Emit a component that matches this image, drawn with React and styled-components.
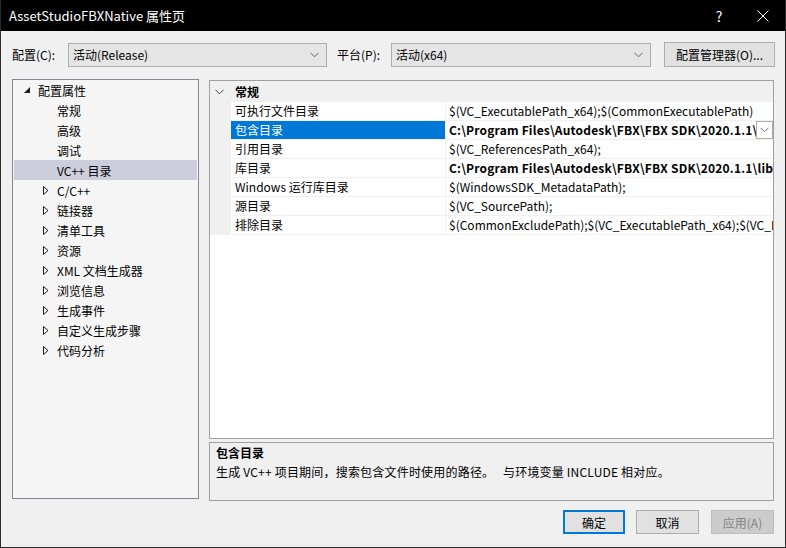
import React from "react";
import styled, { createGlobalStyle } from "styled-components";

const GlobalStyle = createGlobalStyle`
  html, body {
    margin: 0;
    padding: 0;
    background: #f0f0f0;
  }
  * {
    box-sizing: border-box;
  }
`;

const Window = styled.div`
  width: 786px;
  height: 548px;
  display: flex;
  flex-direction: column;
  background: #f0f0f0;
  border: 1px solid #2b2b2b;
  border-top: none;
  font-family: "Noto Sans CJK SC", "Microsoft YaHei", sans-serif;
  font-size: 12px;
  color: #000;
  overflow: hidden;
`;

const TitleBar = styled.div`
  height: 31px;
  background: #000;
  color: #fff;
  display: flex;
  align-items: center;
  padding-left: 8px;
  font-size: 13px;
  flex-shrink: 0;
`;

const TitleText = styled.div`
  flex: 1;
`;

const TitleButton = styled.div`
  width: 44px;
  height: 31px;
  display: flex;
  align-items: center;
  justify-content: center;
  font-size: 14px;
  color: #fff;
`;

const Body = styled.div`
  flex: 1;
  display: flex;
  flex-direction: column;
  padding: 11px 11px 0 11px;
`;

const TopRow = styled.div`
  display: flex;
  align-items: center;
  height: 25px;
`;

const Label = styled.div`
  width: ${(p) => p.$w}px;
  padding-left: ${(p) => p.$pl || 0}px;
  flex-shrink: 0;
  line-height: 25px;
`;

const Combo = styled.div`
  width: ${(p) => p.$w}px;
  height: 24px;
  background: #e5e5e5;
  border: 1px solid #adadad;
  display: flex;
  align-items: center;
  padding: 0 7px 0 4px;
  flex-shrink: 0;
`;

const ComboText = styled.div`
  flex: 1;
`;

const PushButton = styled.div`
  width: ${(p) => p.$w}px;
  height: ${(p) => p.$h || 24}px;
  margin-left: ${(p) => p.$ml || 0}px;
  background: ${(p) => (p.$disabled ? "#cccccc" : "#e1e1e1")};
  border: ${(p) =>
    p.$default ? "2px solid #0078d7" : p.$disabled ? "1px solid #bfbfbf" : "1px solid #adadad"};
  color: ${(p) => (p.$disabled ? "#838383" : "#000")};
  display: flex;
  align-items: center;
  justify-content: center;
  flex-shrink: 0;
`;

const Main = styled.div`
  display: flex;
  margin-top: 12px;
  height: 422px;
`;

const Tree = styled.div`
  width: 187px;
  height: 420px;
  background: #f5f5f5;
  border: 1px solid #828790;
  flex-shrink: 0;
`;

const TreeItem = styled.div`
  height: 20px;
  display: flex;
  align-items: center;
  margin: 0 1px;
  padding-left: ${(p) => p.$indent}px;
  background: ${(p) => (p.$selected ? "#cccedb" : "transparent")};
`;

const Expander = styled.div`
  width: 14px;
  display: flex;
  align-items: center;
`;

const RightCol = styled.div`
  flex: 1;
  min-width: 0;
  margin-left: 10px;
  padding-top: 1px;
  display: flex;
  flex-direction: column;
`;

const Grid = styled.div`
  height: 359px;
  background: #fff;
  border: 1px solid #a0a0a0;
  display: flex;
  flex-direction: column;
  overflow: hidden;
  flex-shrink: 0;
`;

const CategoryRow = styled.div`
  height: 21px;
  background: #f0f0f0;
  display: flex;
  align-items: center;
  font-weight: bold;
  flex-shrink: 0;
`;

const CatChevron = styled.div`
  width: 25px;
  padding-left: 5px;
  display: flex;
  align-items: center;
`;

const PropRow = styled.div`
  height: 19px;
  display: flex;
  border-bottom: 1px solid #f0f0f0;
  flex-shrink: 0;
`;

const Gutter = styled.div`
  width: 21px;
  background: #f0f0f0;
  flex-shrink: 0;
`;

const NameCell = styled.div`
  width: 215px;
  padding-left: 4px;
  line-height: 18px;
  background: ${(p) => (p.$selected ? "#0078d7" : "#fff")};
  color: ${(p) => (p.$selected ? "#fff" : "#000")};
  border-right: 1px solid #f0f0f0;
  flex-shrink: 0;
  white-space: nowrap;
`;

const ValueCell = styled.div`
  flex: 1;
  min-width: 0;
  display: flex;
  padding-left: 3px;
  line-height: 18px;
  font-weight: ${(p) => (p.$bold ? "bold" : "normal")};
  letter-spacing: ${(p) => (p.$bold ? "0.2px" : "0")};
`;

const ValueText = styled.div`
  flex: 1;
  min-width: 0;
  overflow: hidden;
  white-space: nowrap;
`;

const DropButton = styled.div`
  width: 17px;
  height: 18px;
  border: 1px solid #adadad;
  background: #fff;
  display: flex;
  align-items: center;
  justify-content: center;
  flex-shrink: 0;
  font-weight: normal;
`;

const GridFill = styled.div`
  flex: 1;
  background: #fff;
`;

const Description = styled.div`
  margin-top: 3px;
  height: 59px;
  border: 1px solid #a0a0a0;
  background: #f0f0f0;
  padding: 0 6px;
  flex-shrink: 0;
`;

const DescTitle = styled.div`
  font-weight: bold;
  line-height: 20px;
`;

const DescText = styled.div`
  line-height: 18px;
  white-space: pre;
  letter-spacing: 0.2px;
`;

const ButtonRow = styled.div`
  display: flex;
  justify-content: flex-end;
  margin-top: 9px;
`;

const Chevron = ({ color = "#606060" }) => (
  <svg width="9" height="6" viewBox="0 0 9 6">
    <polyline points="0.5,0.8 4.5,4.8 8.5,0.8" fill="none" stroke={color} strokeWidth="1" />
  </svg>
);

const CollapsedArrow = () => (
  <svg width="6" height="9" viewBox="0 0 6 9">
    <polygon points="0.5,0.5 5,4.5 0.5,8.5" fill="none" stroke="#1e1e1e" strokeWidth="1" />
  </svg>
);

const ExpandedArrow = () => (
  <svg width="7" height="7" viewBox="0 0 7 7">
    <polygon points="6,0 6,6 0,6" fill="#1e1e1e" />
  </svg>
);

const treeChildren = ["常规", "高级", "调试", "VC++ 目录"];
const treeGroups = [
  "C/C++",
  "链接器",
  "清单工具",
  "资源",
  "XML 文档生成器",
  "浏览信息",
  "生成事件",
  "自定义生成步骤",
  "代码分析",
];

const props = [
  { name: "可执行文件目录", value: "$(VC_ExecutablePath_x64);$(CommonExecutablePath)" },
  {
    name: "包含目录",
    value: "C:\\Program Files\\Autodesk\\FBX\\FBX SDK\\2020.1.1\\include;$(IncludePath)",
    bold: true,
    selected: true,
  },
  { name: "引用目录", value: "$(VC_ReferencesPath_x64);" },
  {
    name: "库目录",
    value: "C:\\Program Files\\Autodesk\\FBX\\FBX SDK\\2020.1.1\\lib\\vs2017\\x64\\release;$(LibraryPath)",
    bold: true,
  },
  { name: "Windows 运行库目录", value: "$(WindowsSDK_MetadataPath);" },
  { name: "源目录", value: "$(VC_SourcePath);" },
  {
    name: "排除目录",
    value: "$(CommonExcludePath);$(VC_ExecutablePath_x64);$(VC_LibraryPath_x64)",
  },
];

export default function App() {
  return (
    <>
      <GlobalStyle />
      <Window>
        <TitleBar>
          <TitleText>AssetStudioFBXNative 属性页</TitleText>
          <TitleButton>?</TitleButton>
          <TitleButton>
            <svg width="12" height="12" viewBox="0 0 12 12">
              <path d="M0.5 0.5 L11.5 11.5 M11.5 0.5 L0.5 11.5" stroke="#fff" strokeWidth="1" />
            </svg>
          </TitleButton>
        </TitleBar>
        <Body>
          <TopRow>
            <Label $w={56} $pl={0}>配置(C):</Label>
            <Combo $w={259}>
              <ComboText>活动(Release)</ComboText>
              <Chevron />
            </Combo>
            <Label $w={64} $pl={10}>平台(P):</Label>
            <Combo $w={260}>
              <ComboText>活动(x64)</ComboText>
              <Chevron />
            </Combo>
            <PushButton $w={111} $h={25} $ml={13}>
              配置管理器(O)...
            </PushButton>
          </TopRow>

          <Main>
            <Tree>
              <TreeItem $indent={10}>
                <Expander>
                  <ExpandedArrow />
                </Expander>
                配置属性
              </TreeItem>
              {treeChildren.map((t) => (
                <TreeItem key={t} $indent={43} $selected={t === "VC++ 目录"}>
                  {t}
                </TreeItem>
              ))}
              {treeGroups.map((t) => (
                <TreeItem key={t} $indent={29}>
                  <Expander>
                    <CollapsedArrow />
                  </Expander>
                  {t}
                </TreeItem>
              ))}
            </Tree>

            <RightCol>
              <Grid>
                <CategoryRow>
                  <CatChevron>
                    <Chevron color="#404040" />
                  </CatChevron>
                  常规
                </CategoryRow>
                {props.map((p) => (
                  <PropRow key={p.name}>
                    <Gutter />
                    <NameCell $selected={p.selected}>{p.name}</NameCell>
                    <ValueCell $bold={p.bold}>
                      <ValueText>{p.value}</ValueText>
                      {p.selected && (
                        <DropButton>
                          <Chevron color="#707070" />
                        </DropButton>
                      )}
                    </ValueCell>
                  </PropRow>
                ))}
                <GridFill />
              </Grid>
              <Description>
                <DescTitle>包含目录</DescTitle>
                <DescText>
                  {"生成 VC++ 项目期间，搜索包含文件时使用的路径。   与环境变量 INCLUDE 相对应。"}
                </DescText>
              </Description>
            </RightCol>
          </Main>

          <ButtonRow>
            <PushButton $w={62} $default>
              确定
            </PushButton>
            <PushButton $w={63} $ml={11}>
              取消
            </PushButton>
            <PushButton $w={63} $ml={12} $disabled>
              应用(A)
            </PushButton>
          </ButtonRow>
        </Body>
      </Window>
    </>
  );
}
